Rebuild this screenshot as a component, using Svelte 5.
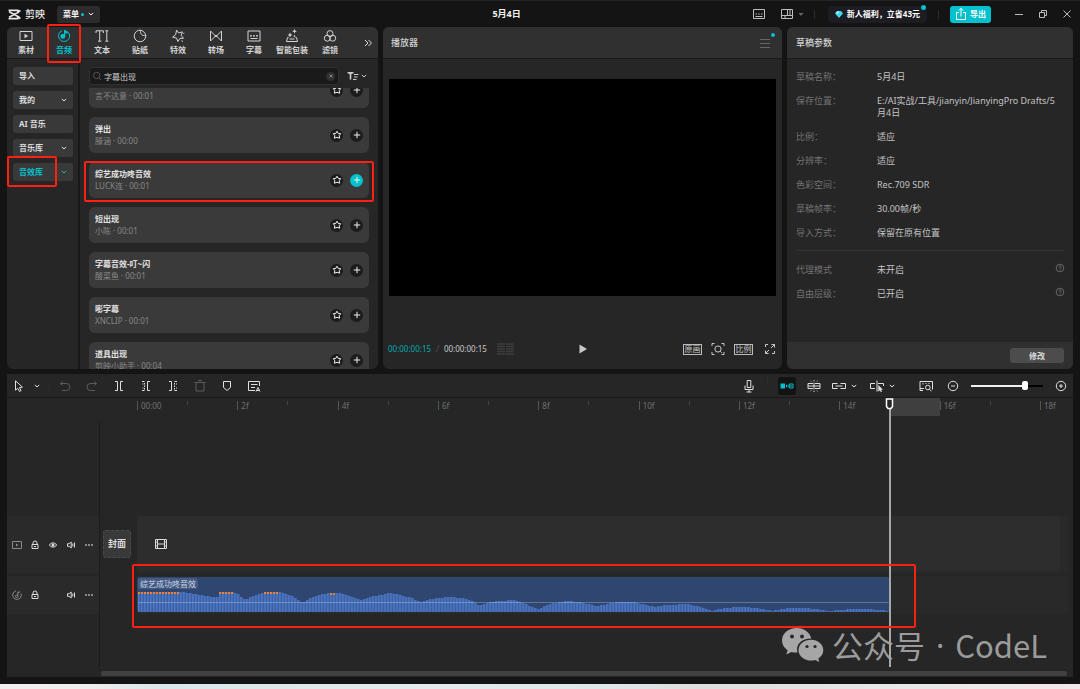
<script lang="ts">
  type Glyph = { s?: string; f?: string };

  // All glyphs are drawn on a 14 × 14 grid: s = stroked, f = filled.
  const glyphs: Record<string, Glyph> = {
    media: { s: 'M1 2.5h12v9H1z', f: 'M5.5 4.8v4.4L9.2 7z' },
    audio: { s: 'M9.8 2A5.6 5.6 0 1 1 5 1.700', f: 'M8.3 1h-1.300v4.200a2.400 2.400 0 1 0 1.300 2.200V3.700l2.400 1.300V3.500z' },
    text: { s: 'M1 4V1.8h7.4V4M4.7 1.8v10.4M3 12.2h3.4M10.3 1.8h3M10.3 12.2h3M11.8 1.8v10.4' },
    sticker: { s: 'M7.6 1.2A5.8 5.8 0 1 0 12.8 6.6M7.6 1.2c-.4 4 1.200 5.600 5.2 5.4M7.6 1.2c2.6.5 4.700 2.600 5.2 5.400' },
    effect: { s: 'M5.600 1.200l2 2.700 3.800-1-1.200 3.500 2.300 2.900-3.600.1-2 3.100-1.400-3.400-3.900-1 3-2.300zM10.500 11.500l1.500 1.200M12.300 4.500l1-.300' },
    transition: { s: 'M1.500 2v10l5-5zM12.500 2v10l-5-5zM6 6l2 2M8 6L6 8' },
    caption: { s: 'M1 2h12v10H1zM3.500 9.500h7', f: 'M3 6.200h2v1.200H3zM6 6.200h2v1.200H6zM9 6.200h2v1.200H9z' },
    captionSmall: { s: 'M1.500 2.500h11v9h-11zM3.500 9.500h7', f: 'M3.500 6.500h1.500v1H3.500zM6.200 6.500h1.500v1H6.200zM9 6.500h1.500v1H9z' },
    pack: { s: 'M3.500 8.500h-1l-1 4h11l-1-4h-1M4.500 10h5', f: 'M5 3.500l.8 1.700 1.700.8-1.700.8L5 8.500l-.8-1.700L2.500 6l1.700-.8zM9.500 0l.7 1.600 1.600.7-1.600.7-.7 1.600-.7-1.600-1.600-.7 1.600-.7zM9.500 5.800l.5 1 .9.400-.9.400-.5 1-.5-1-.9-.4.9-.4z' },
    filter: { s: 'M4 4.600a3 3 0 1 1 6 0a3 3 0 1 1-6 0M1.300 9.200a3 3 0 1 1 6 0a3 3 0 1 1-6 0M6.700 9.200a3 3 0 1 1 6 0a3 3 0 1 1-6 0' },
    more: { s: 'M4 4l3 3-3 3M7.500 4l3 3-3 3' },
    down: { s: 'M4.800 6L7 7.900 9.200 6' },
    search: { s: 'M3.500 6.500a3.200 3.200 0 1 1 6.400 0a3.200 3.200 0 1 1-6.400 0M9 9l2 2' },
    clear: { s: 'M5.500 5.500l3 3M8.500 5.500l-3 3' },
    sort: { s: 'M8 5.500h4.500M8 8h3.500M7 10.500h3.500', f: 'M1.500 3h6v1.500H6l-.7 1v5H3.700v-5l-.7-1H1.500z' },
    star: { s: 'M7 3.200l1.200 2.200 2.500.3-1.500 2 .5 2.500L7 9.300l-2.700.9.500-2.500-1.500-2 2.500-.3z' },
    plus: { s: 'M7 3.800v6.400M3.800 7h6.400' },
    lines: { s: 'M2 3.500h10M2 7.500h10M2 11.500h10' },
    play: { f: 'M3.500 2.500v9L11 7z' },
    focus: { s: 'M1 4V1.500h2.500M10.500 1.500H13V4M13 10v2.500h-2.500M3.500 12.500H1V10M3.900 7a3.100 3.100 0 1 1 6.200 0a3.100 3.100 0 1 1-6.200 0M9.300 9.300l1.500 1.500' },
    expand: { s: 'M2.500 5V2.500h2.500M8.500 2.500h3V5.500M11.500 9v2.500H9M5.500 11.500H2.500V8.500M8 6l3.500-3.500M6 8l-3.500 3.500' },
    help: { s: 'M3.200 7a3.800 3.800 0 1 1 7.600 0a3.800 3.800 0 1 1-7.600 0M5.800 6.300c0-1.700 2.400-1.600 2.400-.2 0 .8-1.200.8-1.200 1.900M7 8.600v.8' },
    layout: { s: 'M1.500 2.500h11v9h-11zM1.500 8.500h11M7.500 2.500v6M10 2.500v6M5 8.500v3' },
    caret: { f: 'M4.500 6h5L7 9z' },
    export: { s: 'M5 5.500H2.500v7h9v-7H9M7 9.500v-8M4.800 3.600L7 1.300l2.200 2.300' },
    min: { s: 'M3 7.500h8' },
    restore: { s: 'M3.500 5.500h5v5h-5zM5.500 5.500v-2h5v5h-2' },
    close: { s: 'M3.500 3.500l7 7M10.500 3.500l-7 7' },
    cursor: { s: 'M3.500 1.800v9.400l2.300-1.900 1.700 3.200 1.600-.9-1.600-3 2.900-.5z' },
    undo: { s: 'M4.500 2.500L2.500 4.500h6a3.500 3.500 0 0 1 0 7H4M2.500 4.500l2 2' },
    redo: { s: 'M9.500 2.500l2 2h-6a3.500 3.500 0 0 0 0 7H10M11.500 4.500l-2 2' },
    split: { s: 'M3 2.500h2.500v9H3M11 2.500H8.500v9H11' },
    trimL: { s: 'M11 2.500H8.500v9H11M3 2.500h2.500M3 11.500h2.500M5.500 4v1.500M5.500 6.500v1.500M5.500 9v1.500M3.500 5h1M3.500 9h1' },
    trimR: { s: 'M3 2.500h2.500v9H3M11 2.500H8.500M11 11.500H8.500M8.500 4v1.500M8.500 6.500v1.500M8.500 9v1.500M10 5h1M10 9h1' },
    trash: { s: 'M1.500 3.500h11M5 1.500h4M3 3.500v8.500h8V3.500' },
    marker: { s: 'M3.500 2.500h7v6L7 11.500 3.500 8.500z' },
    captionCut: { s: 'M8 11.500H1.500v-9h11V7M4 5.500h6.500M4 8.500h4M9 12.500l2-4 2 4M9.500 11.500h3' },
    mic: { s: 'M5.200 1.500h3.600v7H5.200zM3 6.500v4h8v-4M7 10.500v2.500M4.500 13h5' },
    magnet: { s: 'M13 5H9.300v4H13zM8 7h4', f: 'M.5 4.500H5v5H.500zM6 5.800h1.300v2.400H6z' },
    snap: { s: 'M6 4.500H1v5h5M8 4.500h5v5H8M1 7h12M7 1v1.200M7 3.500v7M7 11.800V13M3.500 1.800l.8.800M10.500 1.800l-.8.800M3.500 12.200l.8-.8M10.500 12.200l-.8-.8' },
    link: { s: 'M5.500 4.500h-5v5h5M8.500 4.500h5v5h-5M3.500 7h7' },
    cut: { s: 'M5 4.500H.5v5H5M8 4.500h5.500V7M7 1.500v11', f: 'M8.300 6v6.700l1.600-1.500 1 2 1.100-.6-1-1.900h2z' },
    thumbs: { s: 'M5 9.500H1v-7h12.500v8M4 4v1.500M7 4v1M10 4v1M6.500 8.500a2.300 2.300 0 1 1 4.600 0a2.300 2.300 0 1 1-4.600 0M10.500 10.300l2 2M1 9.500v2h3' },
    zoomOut: { s: 'M2.300 7a4.700 4.700 0 1 1 9.400 0a4.700 4.700 0 1 1-9.400 0M5 7h4' },
    zoomIn: { s: 'M2.300 7a4.700 4.700 0 1 1 9.400 0a4.700 4.700 0 1 1-9.400 0M5 7h4M7 5v4' },
    videoTrack: { s: 'M2.500 3.500h9v7h-9z', f: 'M6 5.500v3L8.500 7z' },
    lock: { s: 'M5 6.500V5a2 2 0 0 1 4 0v1.500M4 6.500h6v4H4zM6 8.500h2' },
    eye: { s: 'M3.200 7q3.800-4.400 7.600 0q-3.800 4.400-7.600 0z', f: 'M5.500 7a1.500 1.500 0 1 1 3 0a1.500 1.500 0 1 1-3 0' },
    sound: { s: 'M3.500 5.700h1.700L7.200 4v6L5.200 8.300H3.500zM8.800 5.500v3M10.500 4.500v5' },
    dots: { f: 'M3.300 6.300h1.400v1.400H3.300zM6.300 6.300h1.400v1.400H6.300zM9.300 6.300h1.400v1.400H9.300z' },
    note: { s: 'M6 2.900A4.300 4.300 0 1 0 11 5.500M8.800 3.200l1 .600M7.800 8V4.200l1.700.6M5.500 8.300a1.200 1.200 0 1 1 2.400 0a1.200 1.200 0 1 1-2.400 0' },
    film: { s: 'M1.500 2.500h11v9h-11zM3.500 2.500v9M10.500 2.500v9M3.500 7h7M1.500 5h2M1.500 9h2M10.500 5h2M10.500 9h2' }
  };

  const tabs = [
    ['media', '素材'], ['audio', '音频'], ['text', '文本'], ['sticker', '贴纸'], ['effect', '特效'],
    ['transition', '转场'], ['caption', '字幕'], ['pack', '智能包装'], ['filter', '滤镜']
  ];
  const categories = [
    { name: '导入', open: false }, { name: '我的', open: true }, { name: 'AI 音乐', open: false },
    { name: '音乐库', open: true }, { name: '音效库', open: true, active: true }
  ];
  const sounds = [
    ['', '言不达意 · 00:01'], ['弹出', '滕涵 · 00:00'], ['综艺成功咚音效', 'LUCK连 · 00:01'], ['短出现', '小陈 · 00:01'],
    ['字幕音效-叮~闪', '酸菜鱼 · 00:01'], ['嘭字幕', 'XNCLIP · 00:01'], ['道具出现', '剪映小助手 · 00:04']
  ];
  const params = [
    ['草稿名称：', '5月4日'], ['保存位置：', 'E:/AI实战/工具/jianyin/JianyingPro Drafts/5月4日'], ['比例：', '适应'],
    ['分辨率：', '适应'], ['色彩空间：', 'Rec.709 SDR'], ['草稿帧率：', '30.00帧/秒'], ['导入方式：', '保留在原有位置']
  ];
  const extras = [['代理模式', '未开启'], ['自由层级：', '已开启']];

  const segment = 10.72;
  const ticks = ['00:00', '2f', '4f', '6f', '8f', '10f', '12f', '14f', '16f', '18f'];
  const clipLength = segment * 7.5;

  // Envelope of the clip: position along it and the height of the wave there.
  const envelope = [
    [0, 20], [46, 20], [55, 18], [75, 15], [80, 15], [81, 20], [95, 20], [100, 18], [107, 12], [114, 16], [122, 18],
    [126, 20], [142, 20], [148, 18], [158, 14], [164, 9], [172, 14], [182, 17], [190, 19], [200, 19], [208, 17],
    [218, 14], [224, 12], [232, 15], [242, 17], [251, 19], [262, 17], [273, 14], [283, 10], [292, 13], [302, 14],
    [312, 15], [325, 14], [332, 12], [341, 6], [352, 10], [362, 11], [374, 12], [382, 10], [392, 6], [400, 3],
    [412, 8], [429, 11], [440, 10], [459, 6], [479, 10], [495, 10], [517, 5], [529, 7], [549, 8], [562, 5], [575, 1],
    [585, 4], [602, 5], [619, 4], [634, 1], [652, 4], [669, 4], [689, 1], [712, 3], [729, 3], [752, 1]
  ];
  function level(x: number) {
    const i = Math.max(1, envelope.findIndex((p) => p[0] >= x));
    const [a, b] = [envelope[i - 1], envelope[i]];
    return Math.round(a[1] + ((b[1] - a[1]) * (x - a[0])) / (b[0] - a[0]));
  }
  const bars = Array.from({ length: 250 }, (_, i) => {
    const x = 1 + i * 3;
    return { x, h: level(x), peak: x < 42 || (x > 80 && x < 95) || (x > 126 && x < 142) || (x > 190 && x < 199) };
  });

  let query = $state('字幕出现');
  let zoom = $state(78);
</script>

{#snippet icon(name: string)}
  <svg class="icon" viewBox="0 0 14 14" aria-hidden="true">
    {#if glyphs[name].s}<path class="line" d={glyphs[name].s} />{/if}
    {#if glyphs[name].f}<path class="solid" d={glyphs[name].f} />{/if}
  </svg>
{/snippet}

<div class="app">
  <header class="titlebar">
    <div class="brand">
      <svg class="logo" viewBox="0 0 12 10" aria-hidden="true">
        <path d="M.5 1.200h8.500v1.500L11.500 1.300M.5 8.800h8.500V7.300l2.500 1.400M1 2.500l9.500 5M1 7.500l9.500-5" />
      </svg>
      <span class="name">剪映</span>
      <button class="menu">菜单<i class="dot"></i>{@render icon('down')}</button>
    </div>
    <h1>5月4日</h1>
    <div class="window">
      <button aria-label="caption">{@render icon('captionSmall')}</button>
      <button class="layout" aria-label="layout">{@render icon('layout')}{@render icon('caret')}</button>
      <i class="sep"></i>
      <button class="promo">
        <svg class="gem" viewBox="0 0 8 7" aria-hidden="true"><path fill="#3fd6ee" d="M2 0h4l2 2.500L4 7 0 2.500z" /><path fill="#c9f7ff" d="M2 .5h2L3 2.500h-2z" /></svg>
        新人福利，立省43元<i class="dot"></i>
      </button>
      <i class="sep"></i>
      <button class="export">{@render icon('export')}导出</button>
      <div class="controls">
        <button aria-label="min">{@render icon('min')}</button>
        <button aria-label="restore">{@render icon('restore')}</button>
        <button aria-label="close">{@render icon('close')}</button>
      </div>
    </div>
  </header>

  <main class="panels">
    <section class="panel library">
      <nav class="bar tabs">
        {#each tabs as [glyph, name]}
          <button class="tab" class:active={glyph === 'audio'}>
            {@render icon(glyph)}<span>{name}</span>
            {#if glyph === 'audio'}<i class="frame"></i>{/if}
          </button>
        {/each}
        <button class="tab-more" aria-label="more">{@render icon('more')}</button>
      </nav>
      <div class="browser">
        <aside class="categories">
          {#each categories as item}
            <button class="category" class:active={item.active}>
              <span>{item.name}</span>
              {#if item.open}{@render icon('down')}{/if}
              {#if item.active}<i class="frame"></i>{/if}
            </button>
          {/each}
        </aside>
        <div class="results">
          <div class="search">
            <label class="field">
              {@render icon('search')}
              <input aria-label="search" bind:value={query} />
              <button class="clear" aria-label="clear" onclick={() => (query = '')}>{@render icon('clear')}</button>
            </label>
            <button class="sort" aria-label="sort">{@render icon('sort')}{@render icon('down')}</button>
          </div>
          <div class="viewport">
            <ul class="sounds">
              {#each sounds as [title, meta], i}
                <li class="sound">
                  <div class="info"><strong>{title}</strong><span>{meta}</span></div>
                  <button class="round" aria-label="favourite">{@render icon('star')}</button>
                  <button class="round" class:on={i === 2} aria-label="add">{@render icon('plus')}</button>
                  {#if i === 2}<i class="frame"></i>{/if}
                </li>
              {/each}
            </ul>
          </div>
        </div>
      </div>
    </section>

    <section class="panel player">
      <div class="bar">
        <h2>播放器</h2>
        <button class="options" aria-label="options">{@render icon('lines')}<i class="dot"></i></button>
      </div>
      <div class="stage"><div class="screen"></div></div>
      <div class="transport">
        <div class="time">
          <b>00:00:00:15</b><i>/</i><span>00:00:00:15</span>
          <svg class="meter" viewBox="0 0 17 13" aria-hidden="true"><path d="M0 1h8M9 1h8M0 3.500h8M9 3.500h8M0 6h8M9 6h8M0 8.500h8M9 8.500h8M0 11h8M9 11h8" /></svg>
        </div>
        <button aria-label="play">{@render icon('play')}</button>
        <div class="view">
          <button class="chip">原画</button>
          <button aria-label="focus">{@render icon('focus')}</button>
          <button class="chip">比例</button>
          <button aria-label="fullscreen">{@render icon('expand')}</button>
        </div>
      </div>
    </section>

    <section class="panel draft">
      <div class="bar"><h2>草稿参数</h2></div>
      <div class="details">
        <dl>
          {#each params as [key, value]}<div><dt>{key}</dt><dd>{value}</dd></div>{/each}
        </dl>
        <dl class="extra">
          {#each extras as [key, value]}<div><dt>{key}</dt><dd>{value}</dd>{@render icon('help')}</div>{/each}
        </dl>
      </div>
      <footer><button class="edit">修改</button></footer>
    </section>
  </main>

  <section class="timeline">
    <div class="toolbar">
      <button class="narrow" aria-label="select">{@render icon('cursor')}</button>
      <button class="narrow" aria-label="select mode">{@render icon('down')}</button>
      <i class="sep"></i>
      <button class="off" aria-label="undo">{@render icon('undo')}</button>
      <button class="off" aria-label="redo">{@render icon('redo')}</button>
      <button aria-label="split">{@render icon('split')}</button>
      <button aria-label="trim left">{@render icon('trimL')}</button>
      <button aria-label="trim right">{@render icon('trimR')}</button>
      <button class="off" aria-label="delete">{@render icon('trash')}</button>
      <button aria-label="marker">{@render icon('marker')}</button>
      <button aria-label="captions">{@render icon('captionCut')}</button>
      <span class="space"></span>
      <button aria-label="record">{@render icon('mic')}</button>
      <i class="sep high"></i>
      <button aria-label="main track magnet"><span class="lit">{@render icon('magnet')}</span></button>
      <button aria-label="snap">{@render icon('snap')}</button>
      <button class="pair" aria-label="link">{@render icon('link')}{@render icon('down')}</button>
      <button class="pair" aria-label="preview axis">{@render icon('cut')}{@render icon('down')}</button>
      <i class="sep faint"></i>
      <button aria-label="thumbnails">{@render icon('thumbs')}</button>
      <button aria-label="zoom out">{@render icon('zoomOut')}</button>
      <input class="zoom" type="range" aria-label="zoom" min="0" max="100" bind:value={zoom} style="--level: {zoom}%" />
      <button class="last" aria-label="zoom in">{@render icon('zoomIn')}</button>
    </div>

    <div class="tracks">
      <div class="heads">
        <div class="head video">
          {@render icon('videoTrack')}{@render icon('lock')}{@render icon('eye')}{@render icon('sound')}{@render icon('dots')}
        </div>
        <div class="head sound-row">
          {@render icon('note')}{@render icon('lock')}<span class="gap"></span>{@render icon('sound')}{@render icon('dots')}
        </div>
      </div>
      <div class="covers"><button class="cover">封面</button></div>
      <div class="lanes">
        <div class="ruler">
          {#each ticks as tick}<span class="tick" style="width: {segment}%">{tick}</span>{/each}
          <i class="range" style="left: {clipLength}%; width: {segment / 2}%"></i>
        </div>
        <div class="lane video"><div class="slot">{@render icon('film')}</div></div>
        <div class="lane sound-row">
          <div class="clip" style="width: {clipLength}%">
            <span class="label">综艺成功咚音效</span>
            <svg class="wave" viewBox="0 0 752 21" preserveAspectRatio="none" aria-hidden="true">
              {#each bars as bar}
                <rect class="body" x={bar.x} y={21 - bar.h} width="3" height={bar.h} />
                <rect class="crest" x={bar.x} y={21 - bar.h} width="1.500" height={bar.h} />
                {#if bar.peak}<rect class="hot" x={bar.x} y={21 - bar.h} width="2" height="2" />{/if}
              {/each}
              <rect class="gain" x="1" y="11" width="750" height="1" />
            </svg>
            <i class="frame"></i>
          </div>
        </div>
        <div class="playhead" style="left: {clipLength}%">
          <svg viewBox="0 0 9 12" aria-hidden="true"><path d="M1.500 1h6v7.500L6 10.500H3L1.500 8.500z" /></svg>
        </div>
      </div>
      <div class="scrollbar"></div>
      <div class="watermark">
        <svg viewBox="0 0 42 34" aria-hidden="true">
          <path d="M15 0C6.500 0 0 5.400 0 12.500c0 4 2.100 7.300 5.600 9.700L4.200 26.500l5.300-2.600c2 .6 4 .8 6 .7C13 16.500 20 10.500 29.300 10.600 28 4.500 22 0 15 0z" />
          <path d="M29 11.800c-7 0-12.500 4.700-12.500 10.400S22 32.600 29 32.600c1.500 0 3-.2 4.300-.6l4 2.100-1-3.600c3.100-2 5-5 5-8.300 0-5.700-5.500-10.400-12.300-10.400z" />
          <g class="eyes"><circle cx="10" cy="8.500" r="1.900" /><circle cx="20" cy="8.500" r="1.900" /><circle cx="25" cy="18.500" r="1.600" /><circle cx="33" cy="18.500" r="1.600" /></g>
        </svg>
        <span>公众号</span><span class="middot">·</span><span>CodeL</span>
      </div>
    </div>
  </section>
  <div class="desktop"></div>
</div>

<style>
  :global(body) { margin: 0; background: #141414; }
  .app {
    height: 100vh; display: grid; box-sizing: border-box; overflow: hidden;
    grid-template-rows: 27px minmax(0, 342fr) 5px minmax(0, 303fr) 7px 5px;
    background: #141414; color: #dcdcdc;
    font: 8px/12px "Noto Sans", "Noto Sans CJK SC", sans-serif;
  }
  button, input { font: inherit; color: inherit; }
  button { display: flex; align-items: center; justify-content: center; padding: 0; border: 0; background: none; }
  h1, h2, ul, dl, dd { margin: 0; padding: 0; }
  .icon { width: 14px; height: 14px; flex: none; display: block; }
  .line { fill: none; stroke: currentColor; stroke-width: 1; }
  .solid { fill: currentColor; }
  .dot { width: 5px; height: 5px; border-radius: 50%; background: #00c1cd; }
  .sep { width: 1px; height: 9px; background: #2c2c2c; }
  .frame { position: absolute; z-index: 3; border: 2px solid #fc2015; border-radius: 2px; pointer-events: none; }

  .titlebar { display: grid; grid-template-columns: 493fr auto 560fr; align-items: center; border-top: 1px solid #232323; }
  .brand { display: flex; align-items: center; padding-left: 8px; }
  .logo { width: 13px; height: 11px; fill: none; stroke: #e6e6e6; stroke-width: 1.500; }
  .name { margin: 0 12px 0 4px; font-size: 10px; font-weight: 500; color: #e6e6e6; }
  .menu { height: 17px; padding: 0 2px 0 6px; border-radius: 3px; background: #2c2c2f; font-weight: 700; color: #f2f2f2; }
  .menu .dot { width: 3px; height: 3px; margin-left: 2px; }
  h1 { font-size: 9px; font-weight: 700; color: #f0f0f0; }
  .window { display: flex; align-items: center; justify-content: flex-end; padding-right: 6px; color: #bdbdbd; }
  .layout { margin: 0 6px 0 14px; }
  .layout .icon + .icon { color: #666; }
  .promo { position: relative; height: 17px; margin: 0 11px 0 13px; padding: 0 7px; gap: 4px; border-radius: 4px; background: #1c1c22; font-weight: 700; white-space: nowrap; color: #fff; }
  .promo .dot { position: absolute; top: -1px; right: 1px; }
  .gem { width: 8px; height: 7px; }
  .export { height: 17px; margin: 0 21px 0 11px; padding: 0 5px 0 4px; gap: 2px; border-radius: 3px; background: #00c1cd; font-weight: 700; white-space: nowrap; color: #fff; }
  .controls { display: flex; gap: 10px; }

  .panels { display: grid; grid-template-columns: 371px minmax(0, 1fr) 286px; gap: 5px; padding: 0 7px; min-height: 0; }
  .panel { display: flex; flex-direction: column; min-width: 0; min-height: 0; border-radius: 6px; background: #262626; }
  .bar { display: flex; align-items: center; height: 31px; flex: none; padding: 0 9px; border-bottom: 1px solid #191919; border-radius: 6px 6px 0 0; background: #303030; }
  h2 { font-size: 9px; font-weight: 500; color: #d0d0d0; }

  .tabs { padding: 0; }
  .tab { position: relative; flex-direction: column; width: 38px; height: 31px; gap: 1px; font-weight: 700; white-space: nowrap; color: #d4d4d4; }
  .tab.active, .category.active { color: #00c1cd; }
  .tab .frame { inset: -3px 2px -5px 2px; }
  .tab-more { flex: 1; padding-left: 8px; }
  .browser { flex: 1; display: flex; min-height: 0; }
  .categories { display: flex; flex-direction: column; gap: 6px; width: 60px; padding: 8px 5px 0 6px; border-right: 2px solid #181818; }
  .category { position: relative; height: 18px; padding: 0 2px 0 6px; justify-content: space-between; border-radius: 3px; background: #393939; font-weight: 700; }
  .category .frame { inset: -7px 16px -6px -6px; }
  .results { flex: 1; display: flex; flex-direction: column; min-width: 0; }
  .search { display: flex; align-items: center; gap: 8px; padding: 8px 9px 3px; }
  .field { flex: 1; display: flex; align-items: center; height: 16px; padding-right: 2px; border: 1px solid #303030; border-radius: 3px; background: #1a1a1a; }
  .field .icon { color: #555; }
  .field input { flex: 1; min-width: 0; height: 14px; padding: 0; border: 0; outline: 0; background: none; color: #ccc; }
  .clear { width: 9px; height: 9px; margin-right: 1px; border-radius: 50%; background: #303030; overflow: hidden; }
  .field .clear .icon { color: #888; }
  .sort { width: 22px; color: #ccc; }
  .sort .icon + .icon { margin-left: -3px; }
  .viewport { flex: 1; min-height: 0; overflow: hidden; padding: 0 9px; }
  .sounds { display: flex; flex-direction: column; gap: 9px; margin-top: -16px; list-style: none; }
  .sound { position: relative; display: flex; align-items: center; gap: 7px; height: 36px; padding: 0 6px; border-radius: 6px; background: #3a3a3a; }
  .sound .frame { inset: -1px -5px -4px -5px; }
  .info { flex: 1; }
  .info strong, .info span { display: block; height: 12px; white-space: nowrap; }
  .info strong { color: #e2e2e2; }
  .info span { color: #878787; }
  .round { width: 13px; height: 13px; border-radius: 50%; background: #1c1c1c; color: #eee; }
  .round.on { background: #00c1cd; }

  .player .bar { justify-content: space-between; padding: 0 10px 0 8px; }
  .options { position: relative; color: #666; }
  .options .dot { position: absolute; top: -3px; right: -3px; width: 4px; height: 4px; }
  .stage { padding: 20px 6px 0; }
  .screen { aspect-ratio: 387 / 217; background: #000; }
  .transport { flex: 1; display: grid; grid-template-columns: 1fr auto 1fr; align-items: center; padding: 33px 5px 0; color: #c8c8c8; }
  .time { display: flex; align-items: center; gap: 5px; }
  .time b { font-weight: 400; color: #00a9b3; }
  .time i { color: #555; }
  .meter { width: 17px; height: 13px; margin-left: 5px; stroke: #3c3c3c; stroke-width: 1.500; }
  .view { display: flex; align-items: center; justify-content: flex-end; gap: 9px; }
  .chip { box-sizing: border-box; width: 19px; height: 11px; border: 1px solid #bbb; line-height: 8px; white-space: nowrap; }
  .view button:last-child { margin-left: 1px; }

  .details { flex: 1; padding: 12px 9px 0; font-size: 9px; }
  .details dl { display: flex; flex-direction: column; gap: 12px; }
  .details dl > div { display: grid; grid-template-columns: 81px 1fr auto; }
  dt { color: #727272; white-space: nowrap; }
  dd { padding-right: 4px; word-break: break-all; color: #c4c4c4; }
  .details .extra { margin-top: 11px; padding-top: 13px; border-top: 1px solid #343434; }
  .extra .icon { margin: -3px -3px -1px 0; color: #666; }
  .draft footer { display: flex; justify-content: flex-end; padding: 6px 9px 6px; border-radius: 0 0 6px 6px; background: #303030; }
  .edit { width: 54px; height: 15px; border-radius: 3px; background: #4c4c4c; font-weight: 700; }

  .timeline { grid-row: 4; margin: 0 7px; display: flex; flex-direction: column; min-height: 0; background: #262626; }
  .toolbar { display: flex; align-items: center; height: 23px; flex: none; padding-left: 3px; border-bottom: 1px solid #191919; color: #e0e0e0; }
  .toolbar button { width: 27px; height: 23px; flex: none; }
  .toolbar .narrow { width: 18px; }
  .toolbar .last { width: 25px; }
  .toolbar .sep { margin: 0 1px 0 3px; }
  .toolbar .high { height: 10px; margin: 0 5px 12px 5px; }
  .toolbar .faint { margin: 0 4px; background: none; }
  .toolbar .off { color: #5c5c5c; }
  .toolbar .pair { width: 38px; }
  .pair .icon + .icon { margin-left: 1px; }
  .space { flex: 1; }
  .lit { padding: 2px; border-radius: 3px; background: #131313; color: #00c1cd; }
  .zoom { appearance: none; width: 72px; height: 12px; margin: 0 5px 0 5px; background: linear-gradient(90deg, #f0f0f0 var(--level), #000 var(--level)) center / 100% 2px no-repeat; }
  .zoom::-webkit-slider-thumb { appearance: none; width: 6px; height: 9px; border-radius: 2px; background: #fff; }

  .tracks { position: relative; flex: 1; display: grid; grid-template-columns: 93px 37px minmax(0, 1fr); grid-template-rows: 1fr 6px; min-height: 0; }
  .heads { margin-top: 22px; padding-top: 96px; border-right: 1px solid #1c1c1c; }
  .head { display: flex; align-items: center; justify-content: space-around; padding: 0 1px; background: #2a2a2a; }
  .head .icon, .gap { width: 14px; }
  .head .icon:first-child { color: #8a8a8a; }
  .video { height: 57px; }
  .sound-row { height: 38px; margin-top: 3px; }
  .covers { padding: 132px 6px 0 3px; }
  .cover { width: 28px; height: 28px; border-radius: 3px; background: #393939; outline: 1px dashed #4a4a4a; outline-offset: -1px; font-size: 9px; font-weight: 700; white-space: nowrap; }
  .lanes { position: relative; min-width: 0; }
  .ruler { position: relative; display: flex; height: 22px; margin-bottom: 96px; overflow: hidden; color: #707070; }
  .tick { box-sizing: border-box; flex: none; height: 9px; margin-top: 3px; padding-left: 3px; border-left: 1px solid #555; line-height: 9px; background: linear-gradient(#444, #444) 50% 0 / 1px 4px no-repeat; }
  .range { position: absolute; top: 0; height: 18px; background: #3f3f3f; }
  .lane { background: linear-gradient(#292929, #292929) 0 0 / calc(100% - 5px) 100% no-repeat; }
  .slot { display: flex; align-items: center; height: 55px; margin-right: 13px; padding-left: 17px; border-radius: 5px; background: #2d2d2d; }
  .clip { position: relative; height: 35px; border-radius: 3px; background: #2f4770; }
  .lane.sound-row { box-sizing: border-box; padding-top: 1px; }
  .label { position: absolute; top: 1px; left: 1px; padding: 0 2px; border-radius: 2px; background: #435a82; line-height: 11px; color: #ced6e4; }
  .wave { position: absolute; bottom: 0; left: 0; width: 100%; height: 21px; }
  .body { fill: #3d60a0; }
  .crest { fill: #4c77c6; }
  .hot { fill: #f08033; }
  .gain { fill: #ffffff40; }
  .clip .frame { inset: -13px -26px -16px -5px; }
  .playhead { position: absolute; z-index: 2; top: 0; bottom: 4px; width: 9px; margin-left: -5px; background: linear-gradient(#a6a6a6, #a6a6a6) 4px 10px / 2px 100% no-repeat; }
  .playhead svg { display: block; width: 9px; height: 12px; fill: #262626; stroke: #fff; stroke-width: 1.500; }
  .scrollbar { grid-column: 1 / -1; height: 5px; margin: 0 6px 0 94px; border-radius: 3px; background: #414141; }
  .watermark { position: absolute; right: 26px; bottom: 13px; display: flex; align-items: center; gap: 11px; font: 400 31px/38px "Noto Sans CJK SC", sans-serif; color: #9b9b9b; }
  .watermark .middot { font-family: "Noto Sans", sans-serif; }
  .watermark svg { width: 42px; height: 34px; margin-right: -3px; fill: #a6a6a6; }
  .watermark .eyes { fill: #262626; }
  .desktop { grid-row: 6; background: linear-gradient(90deg, #f2eeed, #f0eeee 8%, #d9e6e9 15%, #e4eaed 40%, #dfe7ea 55%, #dedede 65%, #e9e7e8 85%, #f3e8ea); }
</style>
